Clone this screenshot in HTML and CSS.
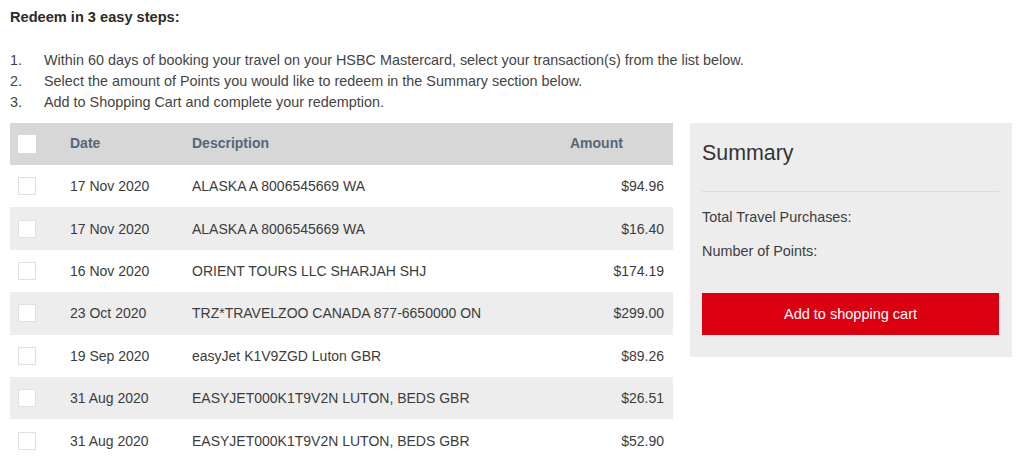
FILE: index.html
```html
<!DOCTYPE html>
<html lang="en">
<head>
<meta charset="utf-8">
<title>Redeem</title>
<link rel="stylesheet" href="styles.css">
</head>
<body>
<div class="page">
  <h2 class="title">Redeem in 3 easy steps:</h2>
  <ol class="steps">
    <li><span class="num">1.</span><span>Within 60 days of booking your travel on your HSBC Mastercard, select your transaction(s) from the list below.</span></li>
    <li><span class="num">2.</span><span>Select the amount of Points you would like to redeem in the Summary section below.</span></li>
    <li><span class="num">3.</span><span>Add to Shopping Cart and complete your redemption.</span></li>
  </ol>
  <div class="main">
    <div class="table">
      <div class="row head">
        <div class="cell cb"><span class="box"></span></div>
        <div class="cell">Date</div>
        <div class="cell">Description</div>
        <div class="cell">Amount</div>
      </div>
      <div class="row">
        <div class="cell cb"><span class="box"></span></div>
        <div class="cell">17 Nov 2020</div>
        <div class="cell">ALASKA A 8006545669 WA</div>
        <div class="cell amt">$94.96</div>
      </div>
      <div class="row alt">
        <div class="cell cb"><span class="box"></span></div>
        <div class="cell">17 Nov 2020</div>
        <div class="cell">ALASKA A 8006545669 WA</div>
        <div class="cell amt">$16.40</div>
      </div>
      <div class="row">
        <div class="cell cb"><span class="box"></span></div>
        <div class="cell">16 Nov 2020</div>
        <div class="cell">ORIENT TOURS LLC SHARJAH SHJ</div>
        <div class="cell amt">$174.19</div>
      </div>
      <div class="row alt">
        <div class="cell cb"><span class="box"></span></div>
        <div class="cell">23 Oct 2020</div>
        <div class="cell">TRZ*TRAVELZOO CANADA 877-6650000 ON</div>
        <div class="cell amt">$299.00</div>
      </div>
      <div class="row">
        <div class="cell cb"><span class="box"></span></div>
        <div class="cell">19 Sep 2020</div>
        <div class="cell">easyJet K1V9ZGD Luton GBR</div>
        <div class="cell amt">$89.26</div>
      </div>
      <div class="row alt">
        <div class="cell cb"><span class="box"></span></div>
        <div class="cell">31 Aug 2020</div>
        <div class="cell">EASYJET000K1T9V2N LUTON, BEDS GBR</div>
        <div class="cell amt">$26.51</div>
      </div>
      <div class="row">
        <div class="cell cb"><span class="box"></span></div>
        <div class="cell">31 Aug 2020</div>
        <div class="cell">EASYJET000K1T9V2N LUTON, BEDS GBR</div>
        <div class="cell amt">$52.90</div>
      </div>
    </div>
    <div class="summary">
      <h3 class="sum-title">Summary</h3>
      <div class="divider"></div>
      <p class="sum-line">Total Travel Purchases:</p>
      <p class="sum-line">Number of Points:</p>
      <button class="cart">Add to shopping cart</button>
    </div>
  </div>
</div>
</body>
</html>
```

FILE: styles.css
```css
* { box-sizing: border-box; }
html, body { margin: 0; padding: 0; background: #fff; }
body {
  font-family: "Liberation Sans", Arial, sans-serif;
  color: #333;
  font-size: 14.4px;
}
.page { padding: 8px 10px 0 10px; }
.title {
  margin: 0;
  font-size: 14.6px;
  font-weight: bold;
  line-height: 18px;
  color: #2b2b2b;
}
.steps {
  list-style: none;
  margin: 24px 0 0 0;
  padding: 0;
  color: #444;
}
.steps li {
  display: flex;
  line-height: 21px;
  height: 21px;
}
.steps .num { width: 34px; flex: none; }
.main {
  display: flex;
  align-items: flex-start;
  gap: 17px;
  margin-top: 10px;
}
.table { width: 663px; flex: none; font-size: 14px; }
.row {
  display: grid;
  grid-template-columns: 60px 122px 378px 103px;
  height: 42.4px;
  align-items: center;
  color: #3c3c3c;
}
.row.head {
  height: 42px;
  background: #d7d7d7;
  color: #56667a;
  font-weight: bold;
  padding-bottom: 3px;
}
.row.alt { background: #ededed; }
.cell.cb { padding-left: 8px; display: flex; align-items: center; }
.head .cell.cb { margin-top: 3px; }
.box {
  display: block;
  width: 18px;
  height: 18px;
  background: #fff;
  border: 1px solid #e0e0e0;
}
.head .box { border-color: #fff; }
.cell.amt { text-align: right; padding-right: 9px; }
.summary {
  width: 322px;
  flex: none;
  background: #ededed;
  padding: 18px 13px 22px 12px;
}
.sum-title {
  margin: 0;
  font-size: 21.4px;
  font-weight: normal;
  line-height: 24px;
  color: #333;
}
.divider {
  height: 1px;
  background: #dcdcdc;
  margin-top: 26px;
}
.sum-line {
  margin: 0;
  line-height: 20px;
  color: #3c3c3c;
}
.sum-line:first-of-type { margin-top: 15px; }
.sum-line + .sum-line { margin-top: 14px; }
.cart {
  display: block;
  width: 100%;
  height: 42px;
  margin-top: 32px;
  background: #db0011;
  border: none;
  color: #fff;
  font-family: "Liberation Sans", Arial, sans-serif;
  font-size: 14.5px;
  padding: 0;
}
```
